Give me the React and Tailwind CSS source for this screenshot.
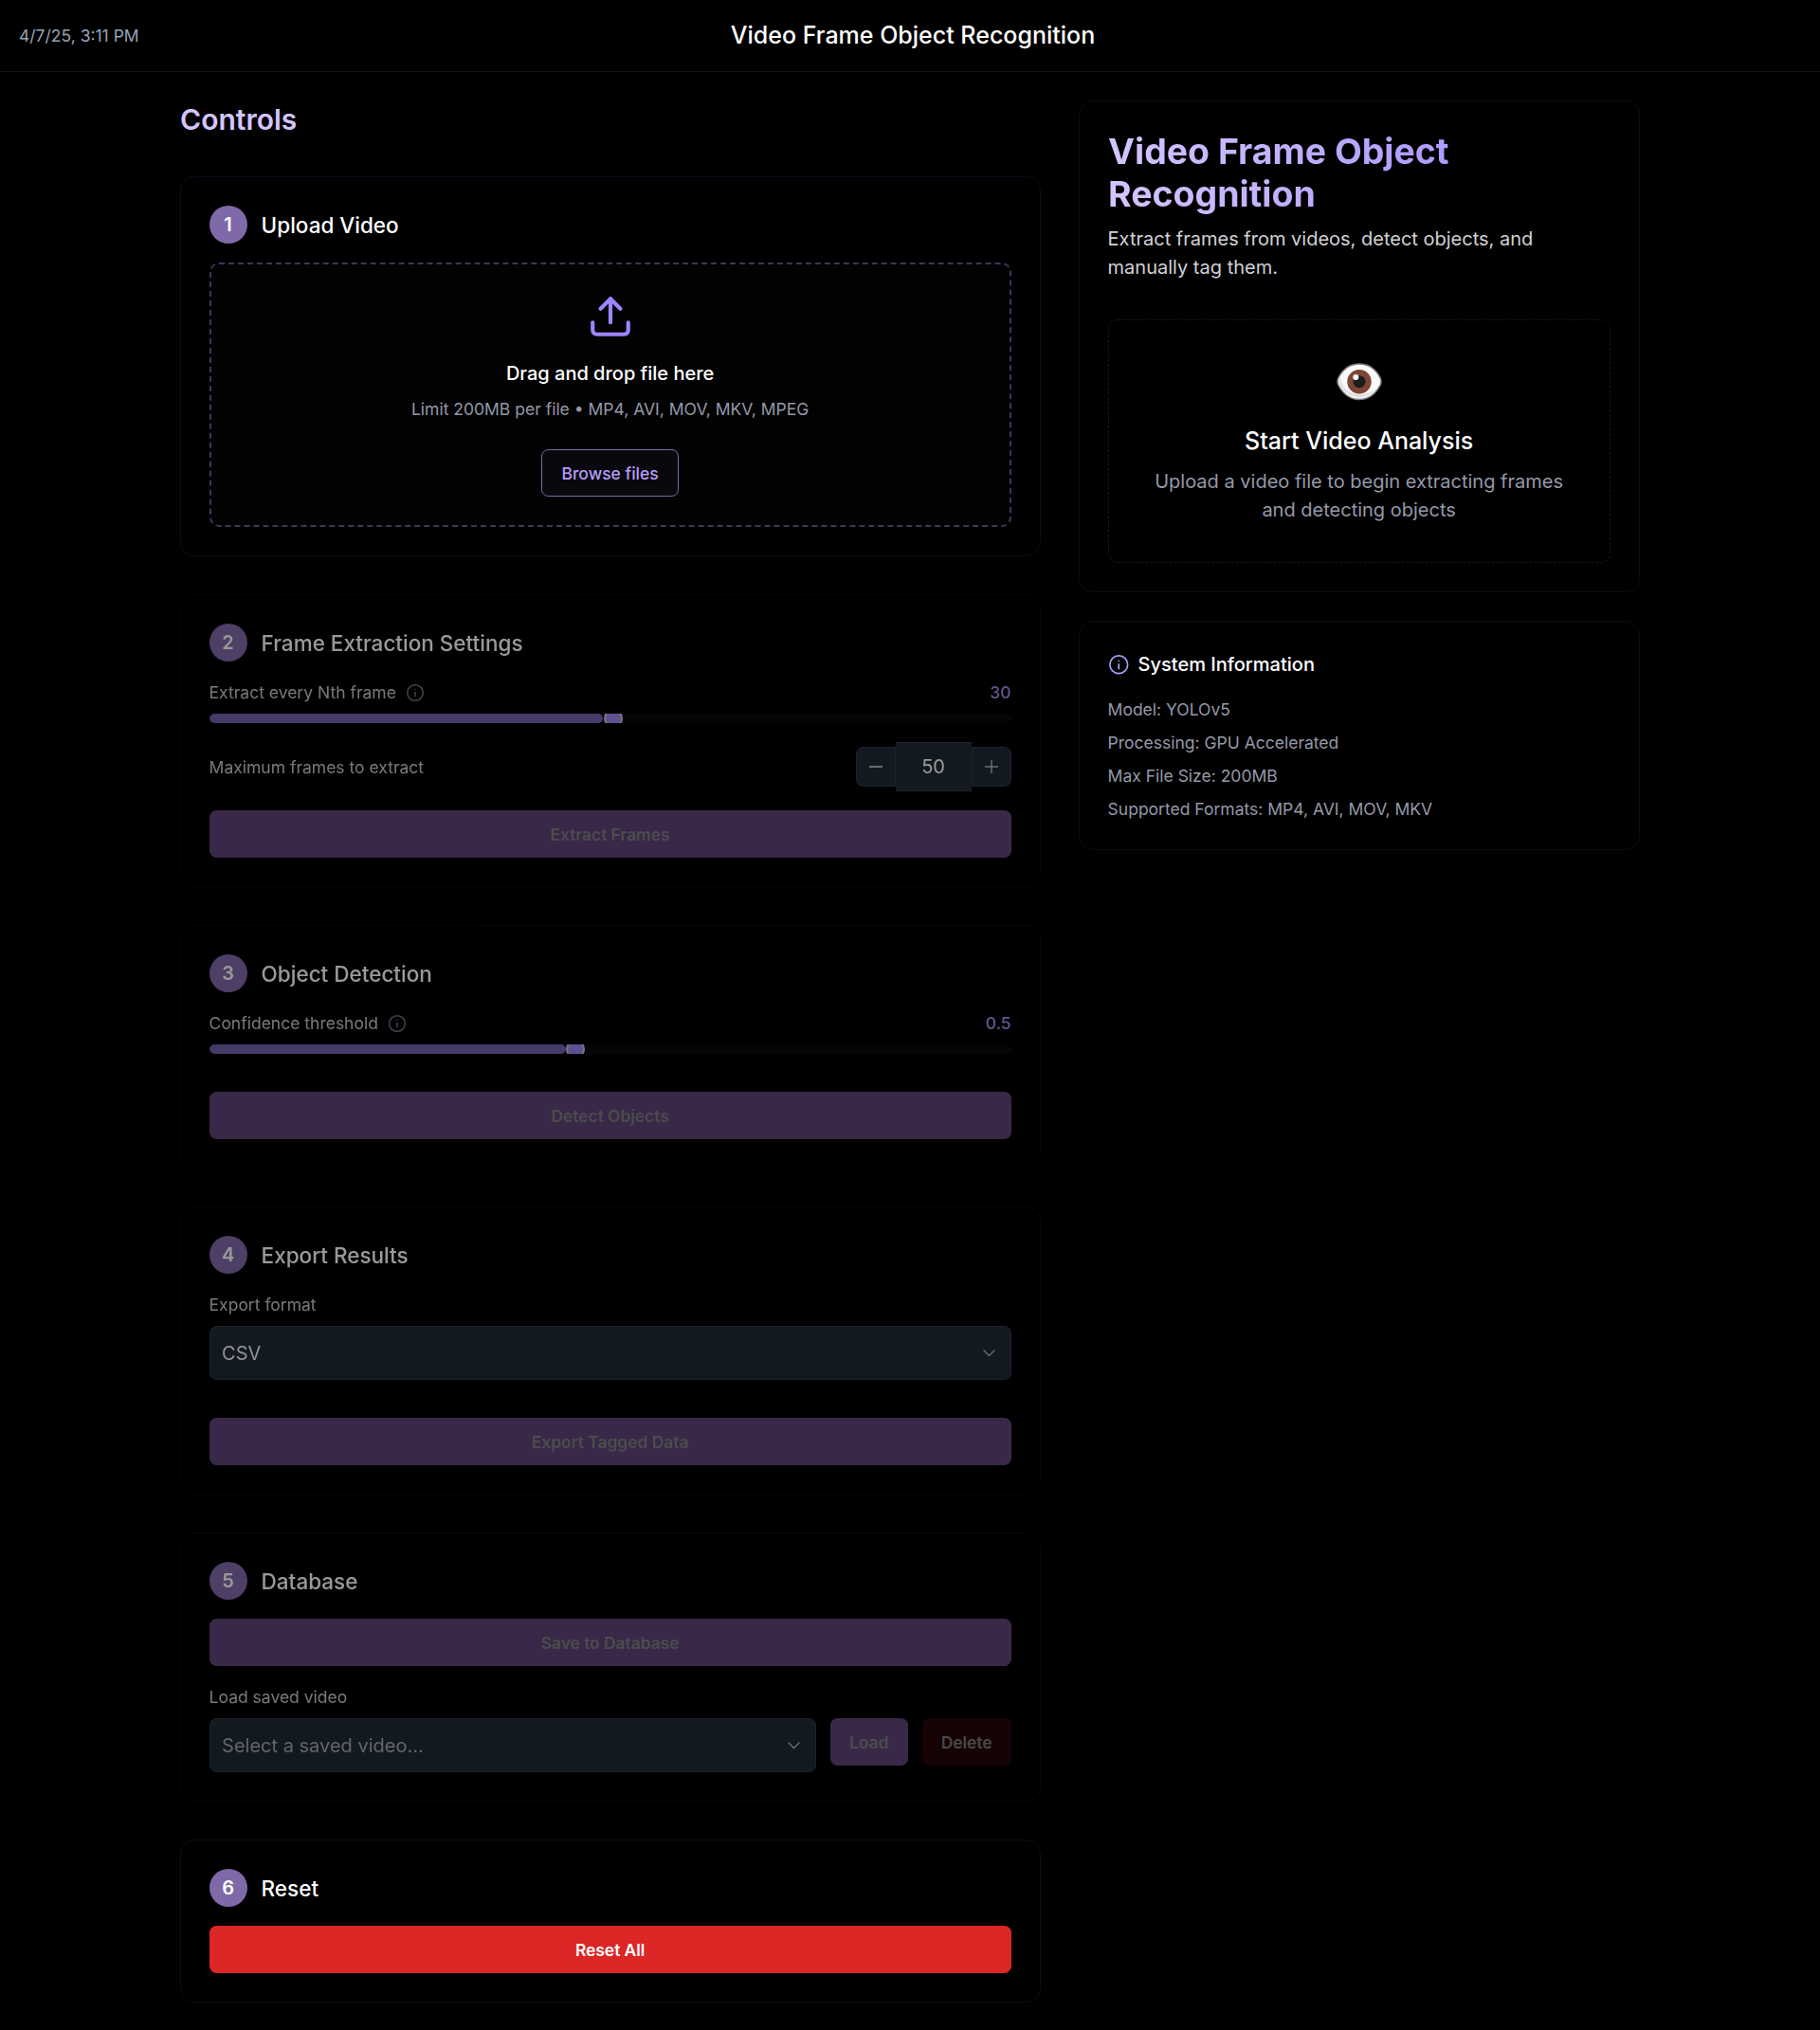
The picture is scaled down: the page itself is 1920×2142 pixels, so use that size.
import React from "react";

function InfoIcon({ size, className }) {
  return (
    <svg width={size} height={size} viewBox="0 0 24 24" fill="none" stroke="currentColor" strokeWidth="1.8" strokeLinecap="round" strokeLinejoin="round" className={className}>
      <circle cx="12" cy="12" r="10" />
      <path d="M12 16.5v-5M12 7.8h.01" />
    </svg>
  );
}

function UploadIcon() {
  return (
    <svg width="50" height="50" viewBox="0 0 24 24" fill="none" stroke="#9f85ff" strokeWidth="2" strokeLinecap="round" strokeLinejoin="round">
      <path d="M21 15v4a2 2 0 0 1-2 2H5a2 2 0 0 1-2-2v-4" />
      <path d="M17 8l-5-5-5 5" />
      <path d="M12 3v12" />
    </svg>
  );
}

function EyeEmoji() {
  return (
    <svg width="48" height="40" viewBox="0 0 48 40">
      <path d="M24 1C14 1 6.500 7 2 15.500Q0 19.500 2 23.500C6.500 32 14 38.500 24 38.500S41.500 32 46 23.500Q48 19.500 46 15.500C41.500 7 34 1 24 1Z" fill="#fafafa" stroke="#7d7d7d" strokeWidth="1.500" />
      <path d="M4 15C5 24 12 33 24 33C33 33 38 31 43.500 25.500C38 33 32 36.500 24 36.500C14 36.500 7 29.500 3 22Q2 18 4 15Z" fill="#e0e0e0" />
      <circle cx="24" cy="19.700" r="12.700" fill="#7d4533" />
      <circle cx="24" cy="19.700" r="6.500" fill="#1c1c1c" />
      <circle cx="20.300" cy="15" r="3" fill="#fff" />
    </svg>
  );
}

function Step({ n, title, muted, children }) {
  return (
    <section className={"rounded-[15px] border border-[#0c0b18] p-[30px] " + (muted ? "opacity-60" : "")}>
      <div className="flex h-10 items-center gap-[15px]">
        <div className="flex size-10 items-center justify-center rounded-full bg-[#8069a9] text-[20px] font-semibold leading-none text-white">{n}</div>
        <h3 className="pt-[2px] text-[22.5px] font-medium leading-[30px] text-white">{title}</h3>
      </div>
      {children}
    </section>
  );
}

function FieldLabel({ text, info, value }) {
  return (
    <div className="mt-5 mb-[9px] flex h-[26px] items-center text-[17.5px] text-[#cacad0]">
      <span>{text}</span>
      {info && <InfoIcon size={20} className="ml-[10px] text-[#6b7385]" />}
      {value && <span className="ml-auto font-medium text-[#a78bee]">{value}</span>}
    </div>
  );
}

function Slider({ fill, thumb }) {
  return (
    <div className="relative h-[10px] overflow-hidden rounded-full bg-[#09090d]">
      <div className="h-full rounded-full bg-[#7361ae]" style={{ width: fill }} />
      <div className="absolute -top-[5px] size-5 rounded-full border-2 border-[#c9c0e0] bg-[#9d85f2]" style={{ left: thumb }} />
    </div>
  );
}

function DisabledButton({ children, className }) {
  return (
    <button className={"block h-[50px] rounded-[7.5px] bg-[#5f4479] pt-[2px] text-[17.5px] font-semibold tracking-[-0.004em] text-[#7f7f7f] " + className}>{children}</button>
  );
}

function Select({ text, className, dim }) {
  return (
    <div className={"flex h-[57px] items-center justify-between rounded-[7.5px] border border-[#323a48] bg-[#1e2a36] pl-[12.5px] pr-[15px] text-[20px] " + className}>
      <span className={dim ? "text-[#a5a8ae]" : "text-[#f2f2f2]"}>{text}</span>
      <svg width="15" height="15" viewBox="0 0 15 15" fill="none" stroke="#b5b8c0" strokeWidth="1.400" strokeLinecap="round" strokeLinejoin="round">
        <path d="M2 5l5.500 5.500L13 5" />
      </svg>
    </div>
  );
}

export default function App() {
  return (
    <div className="h-[2142px] w-[1920px] overflow-hidden bg-black font-['Inter',sans-serif] text-white">
      <header className="grid h-[76px] grid-cols-[1fr_auto_1fr] items-center border-b border-[#12121c] px-5">
        <span className="pt-[2px] text-[17.5px] text-[#94a3b8]">4/7/25, 3:11 PM</span>
        <h1 className="ml-[6px] text-[25px] font-medium">Video Frame Object Recognition</h1>
        <span />
      </header>
      <main className="ml-[189.6px] flex w-[1540px] items-start justify-between pt-[30px]">
        <div className="w-[908px]">
          <h2 className="mb-10 h-10 pl-[0.5px] text-[30px] font-semibold leading-10 text-[#d4c5ff]">Controls</h2>
          <div className="flex flex-col gap-10">
            <Step n="1" title="Upload Video">
              <div className="mt-5 flex h-[279px] flex-col items-center rounded-[10px] border-2 border-dashed border-[#403558] bg-[#020203] pt-[30px]">
                <UploadIcon />
                <p className="mt-5 text-[20px] font-medium leading-[30px]">Drag and drop file here</p>
                <p className="mt-[10px] text-[17.5px] leading-[26px] text-[#9499a8]">Limit 200MB per file • MP4, AVI, MOV, MKV, MPEG</p>
                <button className="mt-[29px] h-[50px] w-[145px] rounded-[7.5px] border border-[#8069a9] bg-[#09090d] pt-[2px] text-[17.5px] font-medium text-[#b69cf8]">Browse files</button>
              </div>
            </Step>
            <Step n="2" title="Frame Extraction Settings" muted>
              <FieldLabel text="Extract every Nth frame" info value="30" />
              <Slider fill="49.1%" thumb="416px" />
              <div className="my-5 flex h-[52px] items-center">
                <span className="pt-[2px] text-[17.5px] text-[#cacad0]">Maximum frames to extract</span>
                <div className="ml-auto flex items-center">
                  <button className="flex size-[42px] items-center justify-center rounded-l-[7.5px] border border-[#323a48] bg-[#1e2a36]">
                    <span className="h-[1.5px] w-[14px] bg-[#b5b5ba]" />
                  </button>
                  <div className="flex h-[52px] w-20 items-center justify-center border-y border-[#323a48] bg-[#1e2a36] text-[20px]">50</div>
                  <button className="flex size-[42px] items-center justify-center rounded-r-[7.5px] border border-[#323a48] bg-[#1e2a36]">
                    <svg width="14" height="14" viewBox="0 0 14 14" stroke="#b5b5ba" strokeWidth="1.500"><path d="M0 7h14M7 0v14" /></svg>
                  </button>
                </div>
              </div>
              <DisabledButton className="w-full">Extract Frames</DisabledButton>
            </Step>
            <Step n="3" title="Object Detection" muted>
              <FieldLabel text="Confidence threshold" info value="0.5" />
              <Slider fill="44.44%" thumb="376px" />
              <DisabledButton className="mt-10 w-full">Detect Objects</DisabledButton>
            </Step>
            <Step n="4" title="Export Results" muted>
              <FieldLabel text="Export format" />
              <Select text="CSV" className="w-full" />
              <DisabledButton className="mt-10 w-full">Export Tagged Data</DisabledButton>
            </Step>
            <Step n="5" title="Database" muted>
              <DisabledButton className="mt-5 w-full">Save to Database</DisabledButton>
              <FieldLabel text="Load saved video" />
              <div className="flex gap-[15px]">
                <Select text="Select a saved video..." className="flex-1" dim />
                <DisabledButton className="w-[82px]">Load</DisabledButton>
                <button className="h-[50px] w-[94px] rounded-[7.5px] bg-[#260608] pt-[2px] text-[17.5px] font-semibold tracking-[-0.004em] text-[#7d7878]">Delete</button>
              </div>
            </Step>
            <Step n="6" title="Reset">
              <button className="mt-5 block h-[50px] w-full rounded-[7.5px] bg-[#dc2626] pt-[2px] text-[17.5px] font-semibold tracking-[-0.004em]">Reset All</button>
            </Step>
          </div>
        </div>
        <aside className="flex w-[592px] flex-col gap-[30px]">
          <section className="h-[519px] rounded-[15px] border border-[#0c0b18] p-[30px]">
            <h2 className="bg-linear-to-r from-[#d4c5ff] to-[#9f85ff] bg-clip-text pl-[0.5px] text-[37.5px] font-bold leading-[45px] tracking-[-0.001em] text-transparent">Video Frame Object Recognition</h2>
            <p className="mt-[10px] w-[480px] text-[20px] leading-[30px] text-[#d1d1d6]">Extract frames from videos, detect objects, and manually tag them.</p>
            <div className="mt-10 flex h-[257px] flex-col items-center rounded-[10px] border border-dashed border-[#161522] pt-[45px] text-center">
              <EyeEmoji />
              <h3 className="mt-[27px] text-[25px] font-medium leading-[30px]">Start Video Analysis</h3>
              <p className="mt-[13px] w-[450px] text-[20px] leading-[30px] text-[#9499a8]">Upload a video file to begin extracting frames and detecting objects</p>
            </div>
          </section>
          <section className="h-[242px] rounded-[15px] border border-[#0c0b18] px-[30px] pt-[30px]">
            <h3 className="flex h-[30px] items-center gap-[9.5px] text-[20px] font-medium"><InfoIcon size={22.5} className="text-[#b69cf8]" />System Information</h3>
            <div className="mt-[15px] text-[17.5px] leading-[35px] text-[#9499a8]">
              <p>Model: YOLOv5</p>
              <p>Processing: GPU Accelerated</p>
              <p>Max File Size: 200MB</p>
              <p>Supported Formats: MP4, AVI, MOV, MKV</p>
            </div>
          </section>
        </aside>
      </main>
    </div>
  );
}
